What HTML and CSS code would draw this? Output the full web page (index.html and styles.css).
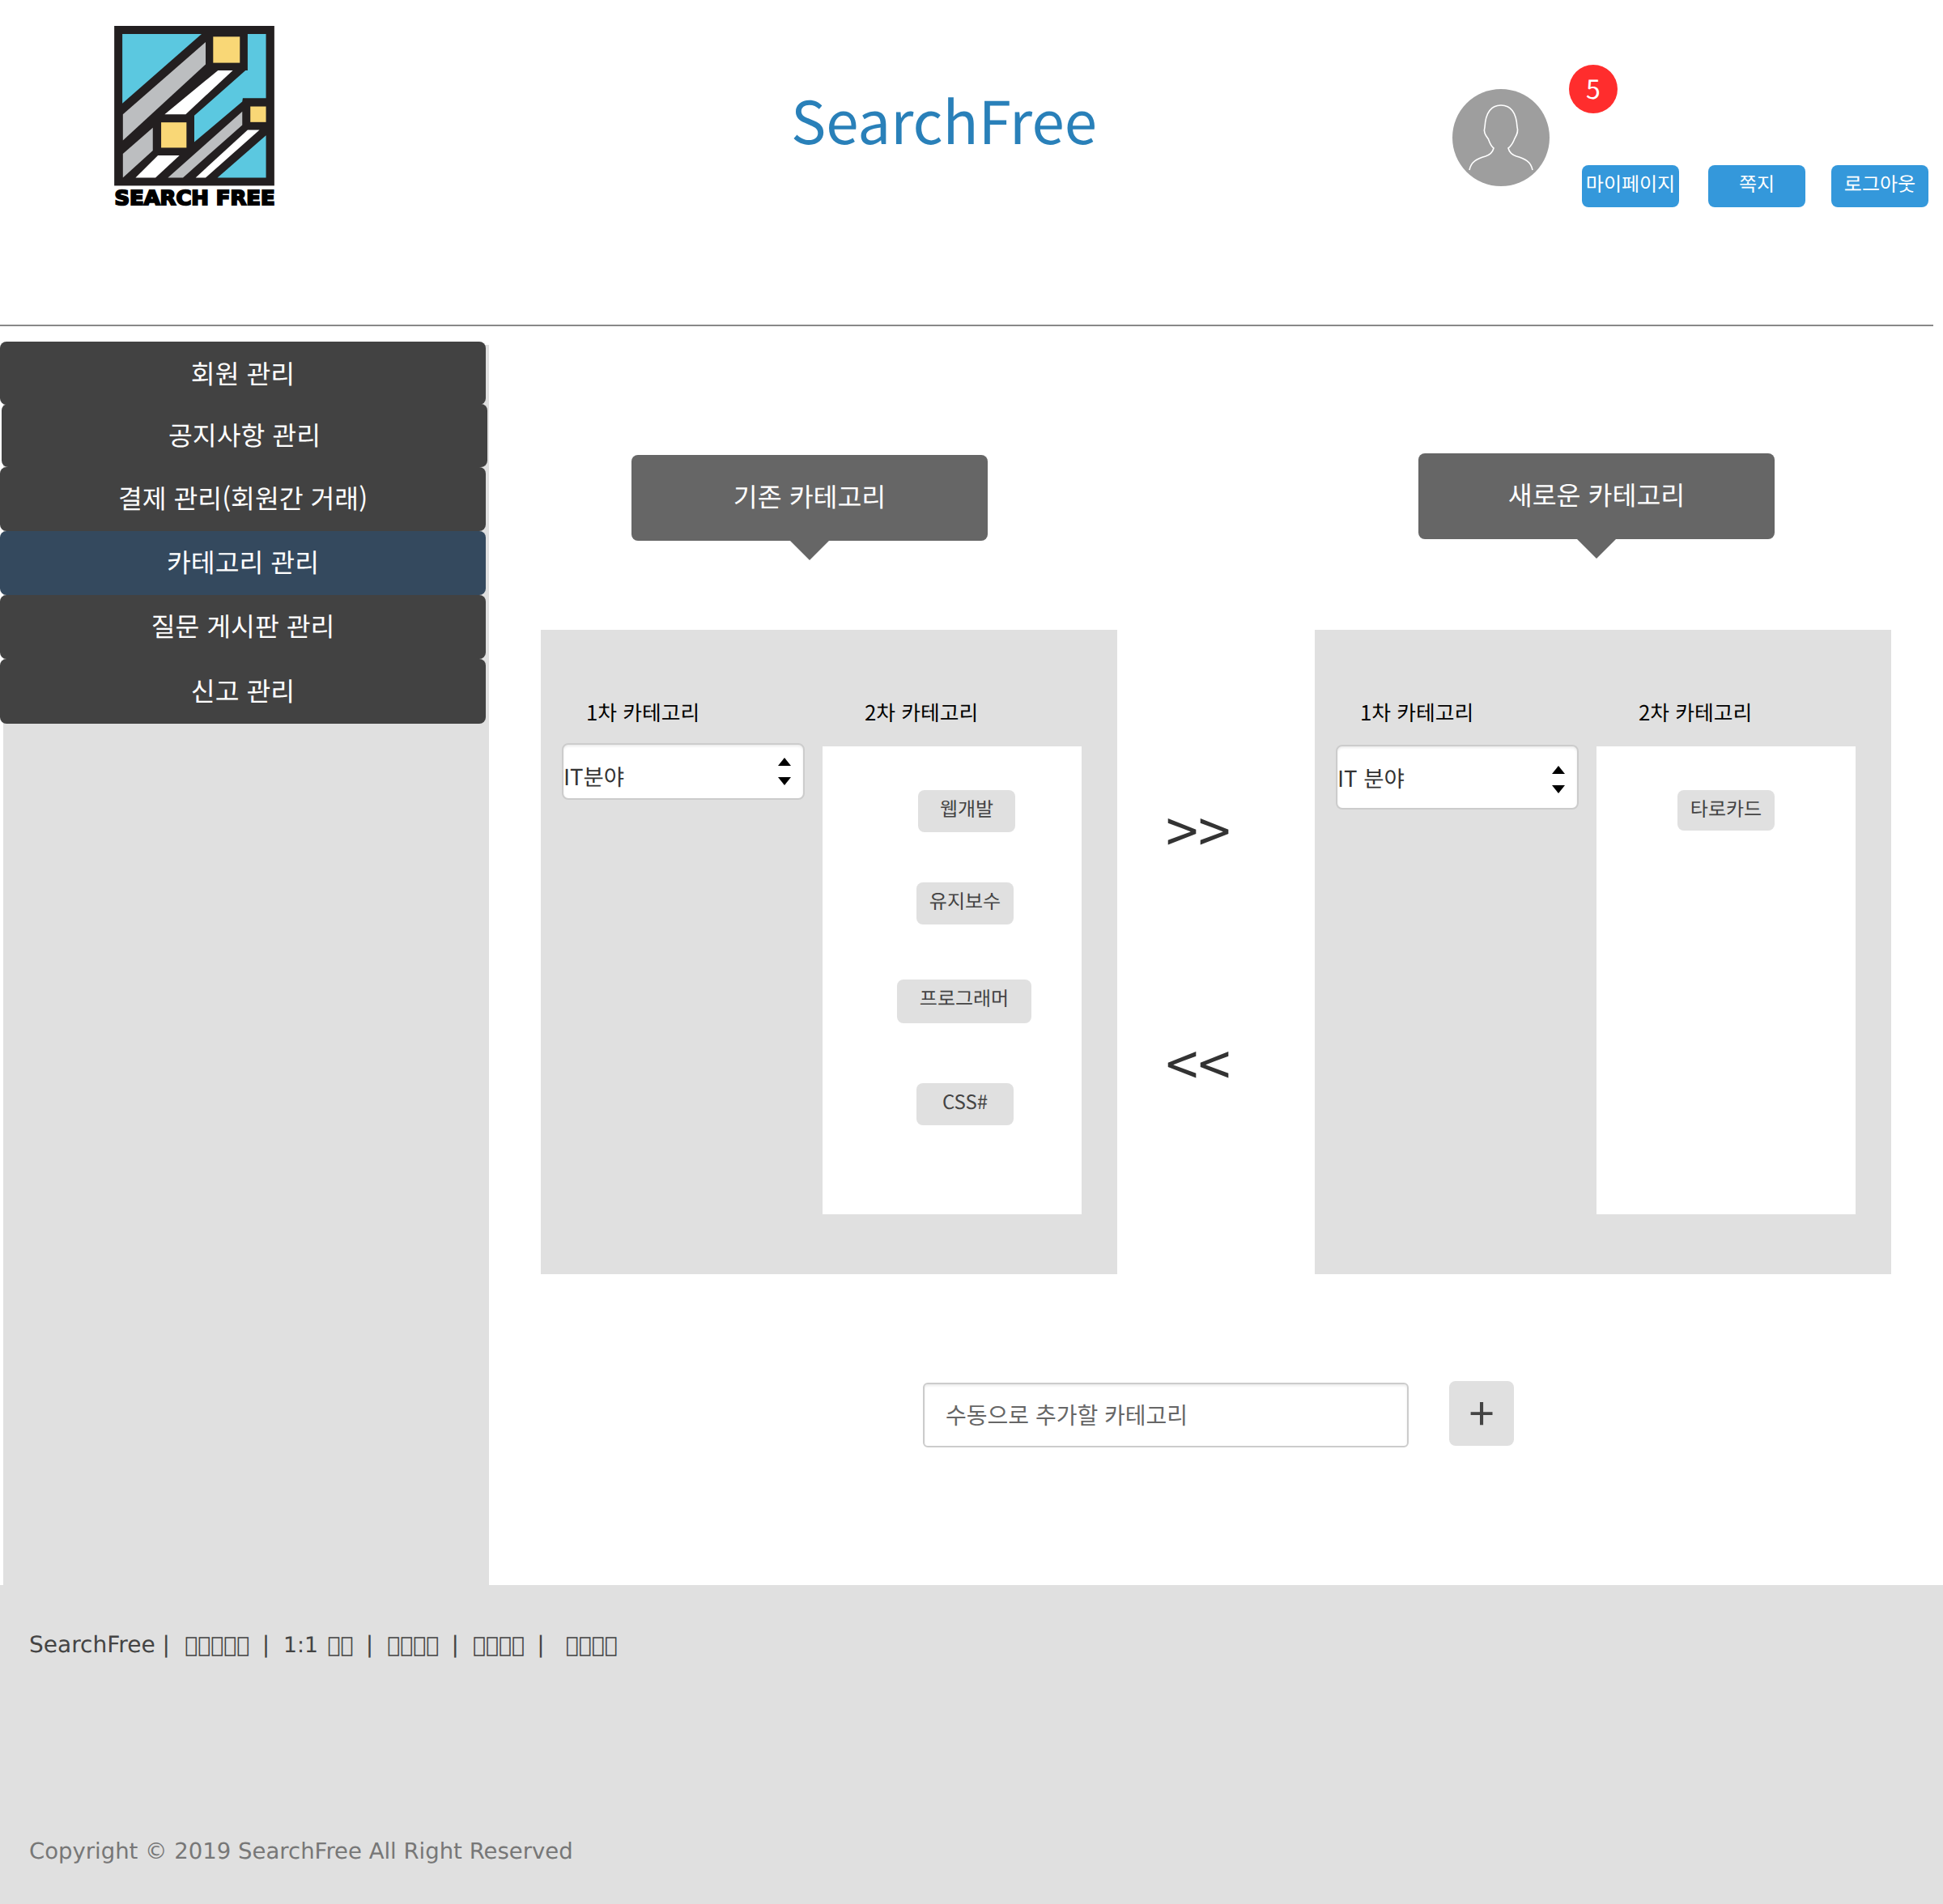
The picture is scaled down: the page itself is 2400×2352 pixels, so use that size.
FILE: index.html
```html
<!DOCTYPE html>
<html lang="ko">
<head>
  <meta charset="UTF-8">
  <title>SearchFree</title>
  <link rel="stylesheet" href="styles.css">
</head>
<body>
  <header class="site-header">
    <svg class="logo" viewBox="123 97 600 700" role="img" aria-label="Search Free">
      <rect x="123" y="97" width="594" height="593" fill="#231f20"/>
      <polygon fill="#5bc8e0" points="153,127 447,127 153,385"/>
      <polygon fill="#5bc8e0" points="618,127 686,127 686,365 600,365 598,378 420,528 420,430 610,262 618,262"/>
      <polygon fill="#5bc8e0" points="686,503 686,660 506,660"/>
      <polygon fill="#bcbec0" points="462,157 462,240 155,522 155,425"/>
      <polygon fill="#bcbec0" points="266,475 266,560 155,660 155,572"/>
      <polygon fill="#bcbec0" points="598,415 598,465 378,660 322,660"/>
      <polygon fill="#fff" points="508,262 563,262 388,425 310,425"/>
      <polygon fill="#fff" points="285,578 365,578 276,660 202,660"/>
      <polygon fill="#fff" points="618,483 662,483 462,660 425,660"/>
      <rect fill="#f9d776" x="490" y="137" width="99" height="97"/>
      <rect fill="#f9d776" x="297" y="455" width="94" height="94"/>
      <rect fill="#f9d776" x="628" y="396" width="58" height="58"/>
      <text class="logo-text" x="124" y="760" textLength="595" lengthAdjust="spacingAndGlyphs">SEARCH FREE</text>
    </svg>
    <h1 class="site-title">SearchFree</h1>
    <div class="avatar">
      <svg viewBox="0 0 120 120" width="120" height="120">
        <path fill="none" stroke="#fff" stroke-width="1.6" d="M21 100C23 90 30 86 41 83C47 81 50 77 51 73C47 70 46 66 44.5 62C41 57 38 53 40 47C41 30 47 20 60 20C73 20 79 30 80 47C82 53 79 57 76.6 62C75 66 73 70 69 73C70 77 73 81 79 83C90 86 97 90 99 100"/>
      </svg>
    </div>
    <div class="user-area">
      <span class="badge">5</span>
      <div class="user-links">
        <a class="user-btn">마이페이지</a>
        <a class="user-btn">쪽지</a>
        <a class="user-btn user-btn-last">로그아웃</a>
      </div>
    </div>
  </header>
  <hr class="divider">

  <div class="page">
    <aside class="sidebar">
      <ul class="menu">
        <li class="menu-item menu-item-first">회원 관리</li>
        <li class="menu-item menu-item-shift">공지사항 관리</li>
        <li class="menu-item">결제 관리(회원간 거래)</li>
        <li class="menu-item active">카테고리 관리</li>
        <li class="menu-item">질문 게시판 관리</li>
        <li class="menu-item menu-item-last">신고 관리</li>
      </ul>
    </aside>

    <main class="content">
      <div class="tags">
        <div class="tag tag-old">기존 카테고리</div>
        <div class="tag tag-new">새로운 카테고리</div>
      </div>

      <div class="transfer">
        <section class="panel">
          <div class="col-first">
            <div class="col-label">1차 카테고리</div>
            <div class="select">
              <span class="select-value">IT분야</span>
              <span class="spinner"><i class="up"></i><i class="down"></i></span>
            </div>
          </div>
          <div class="col-second">
            <div class="col-label">2차 카테고리</div>
            <div class="list">
              <span class="chip chip-web">웹개발</span>
              <span class="chip chip-maint">유지보수</span>
              <span class="chip chip-prog">프로그래머</span>
              <span class="chip chip-css">CSS#</span>
            </div>
          </div>
        </section>

        <div class="arrows">
          <span class="arrow">&gt;&gt;</span>
          <span class="arrow">&lt;&lt;</span>
        </div>

        <section class="panel">
          <div class="col-first">
            <div class="col-label">1차 카테고리</div>
            <div class="select select-tall">
              <span>IT 분야</span>
              <span class="spinner"><i class="up"></i><i class="down"></i></span>
            </div>
          </div>
          <div class="col-second">
            <div class="col-label">2차 카테고리</div>
            <div class="list">
              <span class="chip chip-tarot">타로카드</span>
            </div>
          </div>
        </section>
      </div>

      <div class="add-row">
        <input class="add-input" type="text" placeholder="수동으로 추가할 카테고리">
        <button class="add-btn">+</button>
      </div>
    </main>
  </div>

  <footer class="site-footer">
    <p class="footer-links">SearchFree | <span class="first">&#xE000;&#xE000;&#xE000;&#xE000;&#xE000;</span> | <span class="wide">1:1 &#xE000;&#xE000;</span> | <span>&#xE000;&#xE000;&#xE000;&#xE000;</span> | <span>&#xE000;&#xE000;&#xE000;&#xE000;</span> | <span class="last">&#xE000;&#xE000;&#xE000;&#xE000;</span></p>
    <p class="copyright">Copyright © 2019 SearchFree All Right Reserved</p>
  </footer>
</body>
</html>
```

FILE: styles.css
```css
* {
  box-sizing: border-box;
}
body {
  margin: 0;
  background: #fff;
  color: #333;
  font-family: "Noto Sans CJK KR", "Noto Sans", sans-serif;
  text-rendering: geometricPrecision;
}

/* header */
.site-header {
  display: flex;
  align-items: flex-start;
  height: 402px;
  padding-left: 141px;
}
.logo {
  width: 200px;
  height: 233px;
  margin-top: 32px;
}
.logo-text {
  font-family: "DejaVu Sans", sans-serif;
  font-weight: bold;
  font-size: 74px;
  fill: #000;
  stroke: #000;
  stroke-width: 6;
}
.site-title {
  width: 816px;
  margin: 95px 0 0 636px;
  color: #2980b9;
  font-size: 72.6px;
  font-weight: normal;
  line-height: 104px;
}
.avatar {
  width: 120px;
  height: 120px;
  margin: 110px 0 0 1px;
  border-radius: 50%;
  background: #9e9e9e;
}
.user-area {
  margin: 80px 0 0 24px;
}
.badge {
  display: block;
  width: 60px;
  height: 60px;
  border-radius: 50%;
  background: #ff2d2d;
  color: #fff;
  font-size: 32px;
  line-height: 58px;
  text-align: center;
}
.user-links {
  display: flex;
  gap: 36px;
  margin: 64px 0 0 16px;
}
.user-btn {
  width: 120px;
  height: 52px;
  border-radius: 8px;
  background: #3498db;
  color: #fff;
  font-size: 24px;
  line-height: 44px;
  text-align: center;
}
.user-btn-last {
  margin-left: -4px;
}
.divider {
  width: 2388px;
  height: 2px;
  margin: -1px 0 1px;
  border: none;
  background: #888;
}

/* sidebar */
.page {
  display: flex;
  min-height: 1554px;
}
.sidebar {
  width: 600px;
  margin: 22px 0 0 4px;
  background: #e0e0e0;
}
.menu {
  margin: -4px 0 0 -4px;
  padding: 0;
  list-style: none;
}
.menu-item {
  width: 600px;
  height: 79px;
  border-radius: 8px;
  background: #424242;
  color: #fff;
  font-size: 32.4px;
  line-height: 76px;
  text-align: center;
}
.menu-item-first {
  height: 78px;
  line-height: 77px;
}
.menu-item-shift {
  height: 78px;
  margin: -1px 0 0 2px;
}
.menu-item-last {
  height: 80px;
  line-height: 77px;
}
.menu-item.active {
  background: #34495e;
}

/* main content */
.content {
  flex: 1;
  padding-left: 64px;
}
.tags {
  display: flex;
  align-items: flex-start;
  height: 374px;
  padding-top: 156px;
}
.tag {
  position: relative;
  width: 440px;
  height: 106px;
  border-radius: 8px;
  background: #666;
  color: #fff;
  font-size: 32.5px;
  line-height: 101px;
  text-align: center;
}
.tag::after {
  content: "";
  position: absolute;
  left: 196px;
  top: 106px;
  border-top: 24px solid #666;
  border-left: 24px solid transparent;
  border-right: 24px solid transparent;
}
.tag-old {
  margin: 2px 0 0 112px;
}
.tag-new {
  margin-left: 532px;
}
.transfer {
  display: flex;
  height: 796px;
}
.panel {
  display: flex;
  width: 712px;
  padding-left: 26px;
  background: #e0e0e0;
  color: #000;
}
.col-first {
  width: 300px;
  margin-right: 22px;
}
.col-second {
  width: 320px;
}
.col-label {
  height: 144px;
  padding: 82px 0 0 30px;
  font-size: 25.8px;
  line-height: 40px;
}
.col-second .col-label {
  padding-left: 52px;
}
.select {
  display: flex;
  justify-content: space-between;
  align-items: center;
  height: 70px;
  margin-top: -4px;
  padding: 0 15px 0 0;
  border: 2px solid #ccc;
  border-radius: 8px;
  background: #fff;
  box-shadow: inset 0 2px 3px rgba(0,0,0,0.08);
  font-size: 27.5px;
  color: #333;
}
.select-value {
  margin-top: 10px;
}
.select-tall {
  height: 80px;
  margin-top: -2px;
}
.select-tall .spinner {
  margin-top: 5px;
}
.spinner {
  display: flex;
  flex-direction: column;
  gap: 14px;
}
.spinner i {
  display: block;
  border-left: 8px solid transparent;
  border-right: 8px solid transparent;
}
.spinner .up {
  border-bottom: 10px solid #000;
}
.spinner .down {
  border-top: 10px solid #000;
}
.list {
  display: flex;
  flex-direction: column;
  align-items: flex-start;
  height: 578px;
  background: #fff;
}
.chip {
  width: 120px;
  height: 52px;
  border-radius: 8px;
  background: #e0e0e0;
  color: #444;
  font-size: 24px;
  line-height: 44px;
  text-align: center;
}
.chip-web {
  margin: 54px 0 0 118px;
}
.chip-maint {
  margin: 62px 0 0 116px;
}
.chip-prog {
  width: 166px;
  height: 54px;
  margin: 68px 0 0 92px;
}
.chip-css {
  margin: 74px 0 0 116px;
}
.chip-tarot {
  height: 50px;
  margin: 54px 0 0 100px;
}
.arrows {
  display: flex;
  flex-direction: column;
  gap: 200px;
  width: 244px;
  padding: 208px 0 0 60px;
}
.arrow {
  height: 88px;
  font-size: 72px;
  line-height: 74px;
  color: #333;
}
.add-row {
  display: flex;
  align-items: flex-start;
  padding: 132px 0 0 472px;
}
.add-input {
  width: 600px;
  height: 80px;
  margin-top: 2px;
  padding: 0 0 3px 26px;
  border: 2px solid #ccc;
  border-radius: 6px;
  box-shadow: inset 0 2px 3px rgba(0,0,0,0.08);
  font-family: inherit;
  font-size: 28px;
}
.add-input::placeholder {
  color: #666;
}
.add-btn {
  width: 80px;
  height: 80px;
  margin-left: 50px;
  padding: 0 0 6px;
  border: none;
  border-radius: 8px;
  background: #e0e0e0;
  color: #444;
  font-family: inherit;
  font-size: 56px;
  line-height: 74px;
}

/* footer */
.site-footer {
  height: 394px;
  padding: 54px 0 0 36px;
  background: #e0e0e0;
  font-family: "DejaVu Sans", sans-serif;
  font-size: 28px;
}
.footer-links {
  margin: 0;
  line-height: 40px;
  color: #444;
}
.footer-links span {
  margin: 0 6.5px 0 8px;
  font-size: 26.67px;
}
.footer-links .first {
  margin-left: 9.5px;
}
.footer-links .wide {
  word-spacing: 3px;
}
.footer-links .last {
  margin-left: 17px;
}
.copyright {
  margin: 214px 0 0;
  font-size: 27.5px;
  line-height: 40px;
  color: #777;
}
```
